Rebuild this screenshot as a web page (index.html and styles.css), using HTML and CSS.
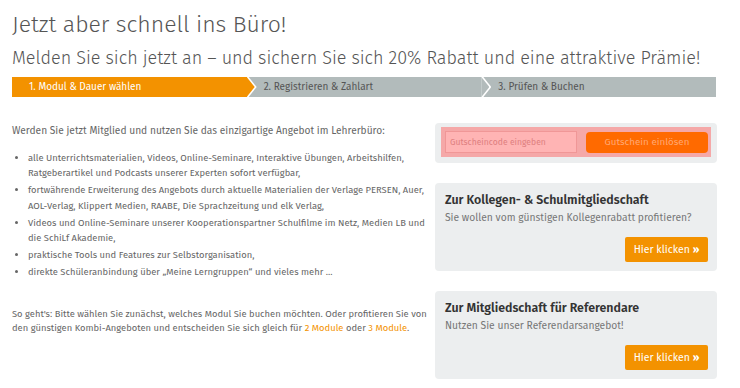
FILE: index.html
```html
<!DOCTYPE html>
<html lang="de">
<head>
    <meta charset="UTF-8">
    <meta name="viewport" content="width=device-width, initial-scale=1.0">
    <title>Lehrerbüro – Anmeldung</title>
    <link rel="stylesheet" href="styles.css">
</head>
<body>
    <div class="page">
        <h1>Jetzt aber schnell ins Büro!</h1>
        <h2>Melden Sie sich jetzt an – und sichern Sie sich 20% Rabatt und eine attraktive Prämie!</h2>

        <div class="steps">
            <div class="step active">1. Modul &amp; Dauer wählen</div>
            <div class="step">2. Registrieren &amp; Zahlart</div>
            <div class="step">3. Prüfen &amp; Buchen</div>
        </div>

        <div class="main">
            <div class="info">
                <p class="intro">Werden Sie jetzt Mitglied und nutzen Sie das einzigartige Angebot im Lehrerbüro:</p>
                <ul class="features">
                    <li>alle Unterrichtsmaterialien, Videos, Online-Seminare, Interaktive Übungen, Arbeitshilfen, Ratgeberartikel und Podcasts unserer Experten sofort verfügbar,</li>
                    <li>fortwährende Erweiterung des Angebots durch aktuelle Materialien der Verlage PERSEN, Auer, AOL-Verlag, Klippert Medien, RAABE, Die Sprachzeitung und elk Verlag,</li>
                    <li>Videos und Online-Seminare unserer Kooperationspartner Schulfilme im Netz, Medien LB und die SchiLf Akademie,</li>
                    <li>praktische Tools und Features zur Selbstorganisation,</li>
                    <li>direkte Schüleranbindung über „Meine Lerngruppen“ und vieles mehr ...</li>
                </ul>
                <p class="howto">So geht's: Bitte wählen Sie zunächst, welches Modul Sie buchen möchten. Oder profitieren Sie von den günstigen Kombi-Angeboten und entscheiden Sie sich gleich für <a href="#">2 Module</a> oder <a href="#">3 Module</a>.</p>
            </div>

            <div class="sidebar">
                <div class="box voucher">
                    <form class="voucher-form">
                        <input type="text" placeholder="Gutscheincode eingeben">
                        <button type="button" class="voucher-btn">Gutschein einlösen</button>
                    </form>
                </div>

                <div class="box offer">
                    <h3>Zur Kollegen- &amp; Schulmitgliedschaft</h3>
                    <p>Sie wollen vom günstigen Kollegenrabatt profitieren?</p>
                    <div class="offer-actions">
                        <a href="#" class="btn">Hier klicken <b>»</b></a>
                    </div>
                </div>

                <div class="box offer">
                    <h3>Zur Mitgliedschaft für Referendare</h3>
                    <p>Nutzen Sie unser Referendarsangebot!</p>
                    <div class="offer-actions">
                        <a href="#" class="btn">Hier klicken <b>»</b></a>
                    </div>
                </div>
            </div>
        </div>
    </div>
</body>
</html>
```

FILE: styles.css
```css
body {
    font-family: 'Fira Sans', 'Open Sans', sans-serif;
    color: #666;
    background-color: #fff;
    margin: 0;
    padding: 0;
}

.page {
    width: 705px;
    margin: 0 0 0 12px;
}

h1 {
    font-size: 23px;
    font-weight: 300;
    color: #555;
    margin: 0;
    padding-top: 9px;
    line-height: 30px;
}

h2 {
    font-size: 18px;
    font-weight: 300;
    color: #555;
    margin: 6px 0 0;
    line-height: 26px;
}

/* step bar */
.steps {
    display: flex;
    width: 704px;
    height: 20px;
    margin-top: 6px;
    background-color: #b2bbbb;
}

.step {
    position: relative;
    flex: 1;
    padding-left: 17px;
    font-size: 10px;
    line-height: 20px;
    color: #555;
    background-color: #b2bbbb;
}

.step.active {
    background-color: #f39200;
    color: #fff;
}

.step::after {
    content: "";
    position: absolute;
    top: 0;
    left: 100%;
    width: 8px;
    height: 20px;
    background-color: inherit;
    clip-path: polygon(0 0, 100% 50%, 0 100%);
    z-index: 2;
}

.step:last-child::after {
    display: none;
}

.step + .step::before {
    content: "";
    position: absolute;
    top: 0;
    left: 0;
    width: 10px;
    height: 20px;
    background-color: #fff;
    clip-path: polygon(0 0, 20% 0, 100% 50%, 20% 100%, 0 100%);
    z-index: 1;
}

/* content */
.main {
    display: flex;
    gap: 3px;
    margin-top: 26px;
}

.info {
    flex: 1;
    font-size: 10.2px;
    line-height: 15.5px;
}

.intro {
    margin: 0 0 11px;
}

.features {
    margin: 0;
    padding-left: 16px;
    font-size: 9.4px;
}

.features li {
    margin-bottom: 1.5px;
}

.howto {
    margin: 27px 0 0;
    font-size: 9.4px;
    line-height: 14.5px;
}

.howto a {
    color: #f39200;
    text-decoration: none;
}

.sidebar {
    width: 282px;
    flex-shrink: 0;
    display: flex;
    flex-direction: column;
    gap: 20px;
}

.box {
    background-color: #eceeef;
    border-radius: 4px;
}

.voucher {
    padding: 4px 6px 6px;
}

.voucher-form {
    display: flex;
    justify-content: space-between;
    align-items: center;
    margin: 0;
    padding: 4px 3px 4px 4px;
    background-color: #f5a8a8;
}

.voucher-form input {
    width: 132px;
    height: 22px;
    box-sizing: border-box;
    padding: 0 4px;
    border: 1px solid #f09797;
    background-color: #ffb4b4;
    font-family: inherit;
    font-size: 8.6px;
    color: #555;
}

.voucher-form input::placeholder {
    color: #de7f7f;
}

.voucher-btn {
    width: 122px;
    height: 21px;
    border: none;
    border-radius: 4px;
    background-color: #ff6a00;
    color: #ffa873;
    font-family: inherit;
    font-size: 9.8px;
    cursor: pointer;
}

.offer {
    padding: 8px 9px 9px 10px;
}

.offer h3 {
    margin: 0;
    font-size: 12.4px;
    font-weight: 600;
    color: #333;
    line-height: 17px;
}

.offer p {
    margin: 2px 0 0;
    font-size: 10.3px;
    line-height: 15px;
    color: #777;
}

.offer-actions {
    display: flex;
    justify-content: flex-end;
    margin-top: 12px;
}

.btn {
    display: block;
    width: 83px;
    height: 25px;
    line-height: 25px;
    text-align: center;
    border-radius: 2px;
    background-color: #f39200;
    color: #fff;
    font-size: 10.5px;
    text-decoration: none;
}
```
